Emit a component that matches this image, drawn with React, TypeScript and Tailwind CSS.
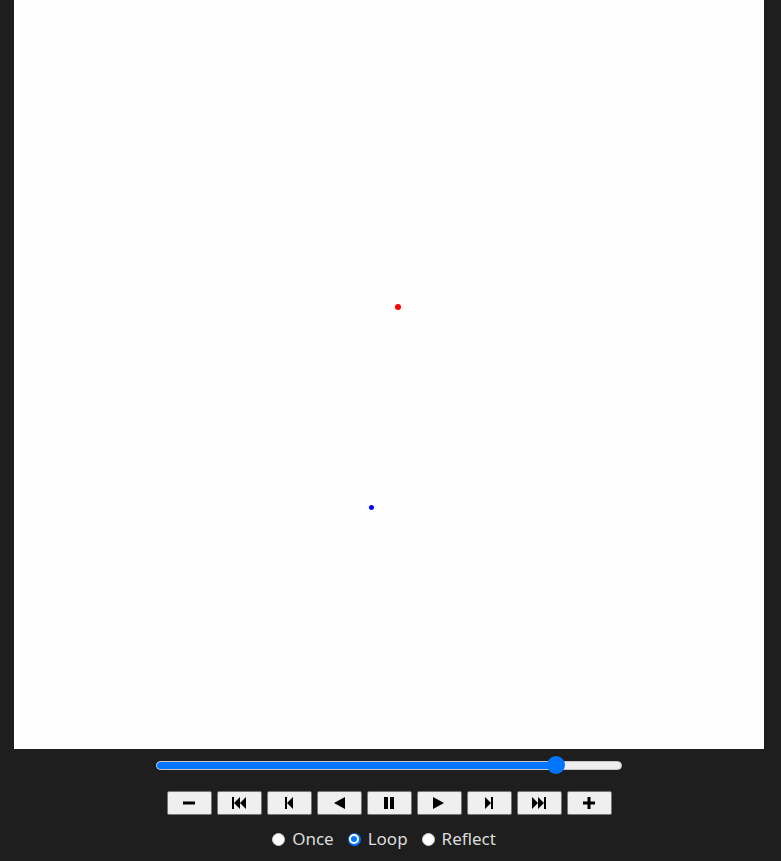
import React, { useState } from "react"

type IconName = "minus" | "first" | "prev" | "back" | "pause" | "play" | "next" | "last" | "plus"

const Icon = ({ name }: { name: IconName }) => {
  switch (name) {
    case "minus":
      return (
        <svg width="14" height="14" viewBox="0 0 14 14">
          <rect x="1" y="5.5" width="12" height="3" fill="#000" />
        </svg>
      )
    case "first":
      return (
        <svg width="16" height="14" viewBox="0 0 16 14">
          <rect x="1" y="1" width="2" height="12" fill="#000" />
          <polygon points="9,1 3,7 9,13" fill="#000" />
          <polygon points="15,1 9,7 15,13" fill="#000" />
        </svg>
      )
    case "prev":
      return (
        <svg width="14" height="14" viewBox="0 0 14 14">
          <rect x="3" y="1" width="2" height="12" fill="#000" />
          <polygon points="11,1 5,7 11,13" fill="#000" />
        </svg>
      )
    case "back":
      return (
        <svg width="14" height="14" viewBox="0 0 14 14">
          <polygon points="13,1 2,7 13,13" fill="#000" />
        </svg>
      )
    case "pause":
      return (
        <svg width="14" height="14" viewBox="0 0 14 14">
          <rect x="2" y="1" width="4" height="12" fill="#000" />
          <rect x="8" y="1" width="4" height="12" fill="#000" />
        </svg>
      )
    case "play":
      return (
        <svg width="14" height="14" viewBox="0 0 14 14">
          <polygon points="1,1 12,7 1,13" fill="#000" />
        </svg>
      )
    case "next":
      return (
        <svg width="14" height="14" viewBox="0 0 14 14">
          <polygon points="3,1 9,7 3,13" fill="#000" />
          <rect x="9" y="1" width="2" height="12" fill="#000" />
        </svg>
      )
    case "last":
      return (
        <svg width="16" height="14" viewBox="0 0 16 14">
          <polygon points="1,1 7,7 1,13" fill="#000" />
          <polygon points="7,1 13,7 7,13" fill="#000" />
          <rect x="13" y="1" width="2" height="12" fill="#000" />
        </svg>
      )
    case "plus":
      return (
        <svg width="14" height="14" viewBox="0 0 14 14">
          <rect x="1" y="5.5" width="12" height="3" fill="#000" />
          <rect x="5.5" y="1" width="3" height="12" fill="#000" />
        </svg>
      )
  }
}

const buttons: IconName[] = ["minus", "first", "prev", "back", "pause", "play", "next", "last", "plus"]
const modes = ["Once", "Loop", "Reflect"]

const Radio = ({ checked }: { checked: boolean }) =>
  checked ? (
    <span className="flex items-center justify-center w-[13px] h-[13px] rounded-full bg-[#0075ff]">
      <span className="flex items-center justify-center w-[10px] h-[10px] rounded-full bg-white">
        <span className="w-[6px] h-[6px] rounded-full bg-[#0075ff]" />
      </span>
    </span>
  ) : (
    <span className="w-[13px] h-[13px] rounded-full bg-white border border-[#d0d0d0]" />
  )

export default function App() {
  const [mode, setMode] = useState("Loop")
  const progress = 0.873

  return (
    <div className="min-h-[861px] bg-[#1e1e1e] font-['Noto_Sans',sans-serif]">
      <div className="w-[778px] flex flex-col items-center">
        <div className="relative w-[750px] h-[749px] bg-[#fefefe]">
          <span className="absolute left-[380.5px] top-[303.5px] w-[6px] h-[6px] rounded-full bg-[#ff0000]" />
          <span className="absolute left-[354.5px] top-[505px] w-[5px] h-[5px] rounded-full bg-[#0000ff]" />
        </div>

        <div className="mt-[7px] relative w-[466px] h-[18px] flex items-center">
          <div className="w-full h-[9px] rounded-full bg-[#efefef] border border-[#c8c8c8] overflow-hidden">
            <div className="h-full bg-[#0075ff]" style={{ width: `${progress * 100}%` }} />
          </div>
          <span
            className="absolute top-0 w-[18px] h-[18px] rounded-full bg-[#0075ff]"
            style={{ left: `calc(${progress} * (100% - 18px))` }}
          />
        </div>

        <div className="mt-[17px] flex gap-[5px]">
          {buttons.map((b) => (
            <button
              key={b}
              className="w-[45px] h-[24px] flex items-center justify-center bg-[#efefef] border border-[#767676] rounded-[2px]"
            >
              <Icon name={b} />
            </button>
          ))}
        </div>

        <div className="mt-[12px] pr-[10px] flex items-center gap-[14px] text-[17px] text-[#dcdcdc] leading-[24px]">
          {modes.map((m) => (
            <label key={m} className="flex items-center gap-[7px] cursor-pointer" onClick={() => setMode(m)}>
              <Radio checked={mode === m} />
              <span>{m}</span>
            </label>
          ))}
        </div>
      </div>
    </div>
  )
}
